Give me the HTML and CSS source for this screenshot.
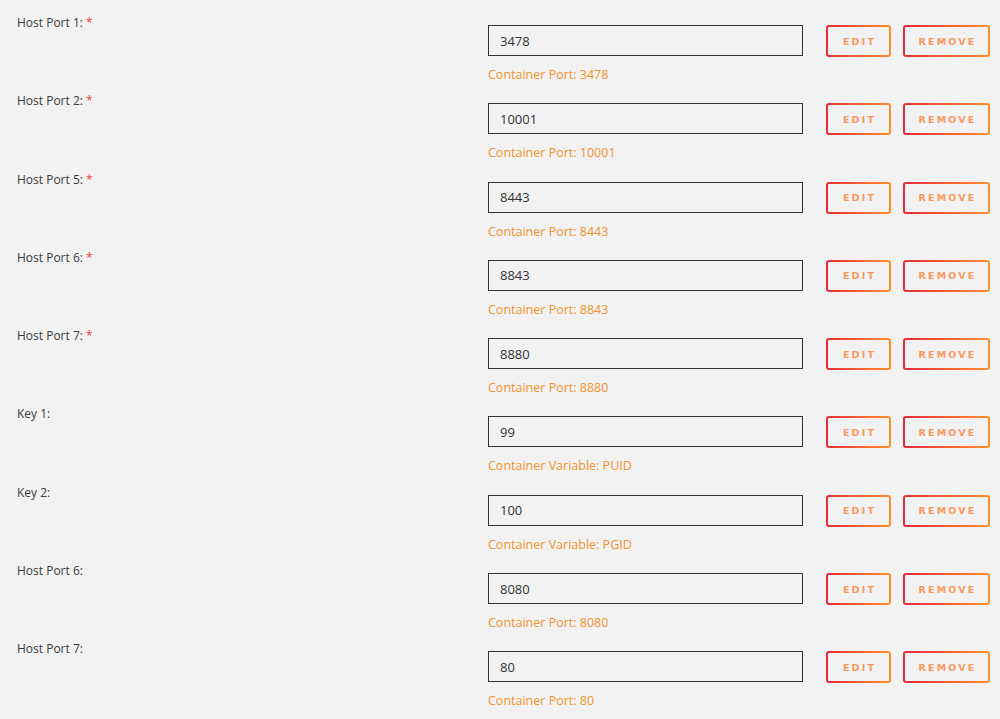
FILE: index.html
```html
<!DOCTYPE html>
<html lang="en">
<head>
    <meta charset="UTF-8">
    <meta name="viewport" content="width=device-width, initial-scale=1.0">
    <title>Container Settings</title>
    <link rel="stylesheet" href="styles.css">
</head>
<body>
    <div class="settings" id="settings"></div>

    <script>
        const fields = [
            { label: 'Host Port 1:', required: true, value: '3478', hint: 'Container Port: 3478' },
            { label: 'Host Port 2:', required: true, value: '10001', hint: 'Container Port: 10001' },
            { label: 'Host Port 5:', required: true, value: '8443', hint: 'Container Port: 8443' },
            { label: 'Host Port 6:', required: true, value: '8843', hint: 'Container Port: 8843' },
            { label: 'Host Port 7:', required: true, value: '8880', hint: 'Container Port: 8880' },
            { label: 'Key 1:', required: false, value: '99', hint: 'Container Variable: PUID' },
            { label: 'Key 2:', required: false, value: '100', hint: 'Container Variable: PGID' },
            { label: 'Host Port 6:', required: false, value: '8080', hint: 'Container Port: 8080' },
            { label: 'Host Port 7:', required: false, value: '80', hint: 'Container Port: 80' }
        ];

        const settings = document.getElementById('settings');

        fields.forEach(function(field) {
            const row = document.createElement('div');
            row.className = 'setting-row';
            row.innerHTML = `
                <div class="setting-label">${field.label}${field.required ? ' <span class="required">*</span>' : ''}</div>
                <div class="setting-field">
                    <input type="text" value="${field.value}">
                    <div class="setting-hint">${field.hint}</div>
                </div>
                <div class="setting-actions">
                    <button class="btn btn-edit">Edit</button>
                    <button class="btn btn-remove">Remove</button>
                </div>
            `;
            settings.appendChild(row);
        });
    </script>
</body>
</html>
```

FILE: styles.css
```css
* {
    margin: 0;
    padding: 0;
    box-sizing: border-box;
}

body {
    background-color: #f2f2f2;
    font-family: "Open Sans", "Liberation Sans", sans-serif;
    font-size: 12.5px;
    color: #3a3a3a;
    overflow: hidden;
}

.settings {
    padding-left: 17px;
}

.setting-row {
    display: grid;
    grid-template-columns: 448px 315px auto;
    column-gap: 23px;
    height: 78.3px;
}

.setting-label {
    margin-top: 15px;
    line-height: 16px;
    font-size: 12px;
    color: #3a3a3a;
}

.required {
    color: #ec3a48;
}

.setting-field {
    margin-top: 25px;
}

input {
    display: block;
    width: 315px;
    height: 31px;
    padding: 0 11px;
    border: 1px solid #333;
    border-radius: 0;
    background: #f2f2f2;
    color: #333;
    font-family: "Open Sans", "Liberation Sans", sans-serif;
    font-size: 13px;
    outline: none;
}

.setting-hint {
    margin-top: 11px;
    line-height: 16px;
    color: #f0922e;
}

.setting-actions {
    margin-top: 25px;
    display: flex;
    gap: 12px;
    align-items: flex-start;
}

.btn {
    height: 32px;
    padding-left: 2px;
    border: 2px solid transparent;
    border-radius: 3px;
    background: linear-gradient(#f2f2f2, #f2f2f2) padding-box,
                linear-gradient(to right, #e52b3a, #ff8f2a) border-box;
    color: #f8985f;
    font-family: "DejaVu Sans", sans-serif;
    font-size: 9.5px;
    font-weight: bold;
    letter-spacing: 2.2px;
    text-transform: uppercase;
    cursor: pointer;
}

.btn-edit {
    width: 65px;
}

.btn-remove {
    width: 87px;
}
```
